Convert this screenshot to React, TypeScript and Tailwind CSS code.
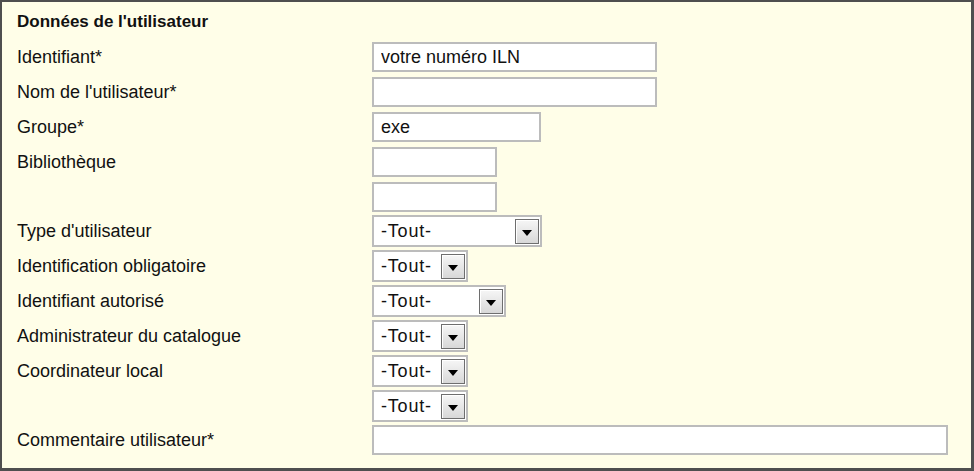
import React from 'react';

type Field =
  | { kind: 'input'; label: string; width: number; value?: string; gap: number }
  | { kind: 'select'; label: string; width: number; value: string; gap: number };

const fields: Field[] = [
  { kind: 'input', label: 'Identifiant*', width: 285, value: 'votre numéro ILN', gap: 5 },
  { kind: 'input', label: "Nom de l'utilisateur*", width: 285, gap: 5 },
  { kind: 'input', label: 'Groupe*', width: 169, value: 'exe', gap: 5 },
  { kind: 'input', label: 'Bibliothèque', width: 125, gap: 5 },
  { kind: 'input', label: '', width: 125, gap: 3 },
  { kind: 'select', label: "Type d'utilisateur", width: 170, value: '-Tout-', gap: 3 },
  { kind: 'select', label: 'Identification obligatoire', width: 96, value: '-Tout-', gap: 3 },
  { kind: 'select', label: 'Identifiant autorisé', width: 134, value: '-Tout-', gap: 3 },
  { kind: 'select', label: 'Administrateur du catalogue', width: 96, value: '-Tout-', gap: 3 },
  { kind: 'select', label: 'Coordinateur local', width: 96, value: '-Tout-', gap: 3 },
  { kind: 'select', label: '', width: 96, value: '-Tout-', gap: 3 },
  { kind: 'input', label: 'Commentaire utilisateur*', width: 576, gap: 0 },
];

function TextBox({ width, value }: { width: number; value?: string }) {
  return (
    <input
      type="text"
      readOnly
      value={value ?? ''}
      style={{ width }}
      className="h-[30px] border-2 border-[#bcbcbc] bg-white pl-[7px] text-[18px] text-[#111] outline-none"
    />
  );
}

function DropDown({ width, value }: { width: number; value: string }) {
  return (
    <div
      role="combobox"
      style={{ width }}
      className="flex h-[32px] items-center justify-between border-2 border-[#bcbcbc] bg-white pl-[7px] pr-[1px]"
    >
      <span className="text-[18px] leading-none tracking-[0.8px] text-[#111]">{value}</span>
      <span className="flex h-[25px] w-[24px] items-center justify-center border border-[#6e6e6e] bg-gradient-to-b from-[#f6f6f6] to-[#d8d8d8] pt-[3px] shadow-[inset_1px_1px_0_#ffffff]">
        <svg width="10" height="6" viewBox="0 0 10 6">
          <path d="M0 0 H10 L5 6 Z" fill="#000" />
        </svg>
      </span>
    </div>
  );
}

export default function App() {
  return (
    <div className="h-[471px] w-[974px] border-t-2 border-l-2 border-r-[3px] border-b-[3px] border-[#4f4f4f] bg-[#fffee8] pl-[15px] pt-[10px] font-['Liberation_Sans',Arial,sans-serif] text-[#111]">
      <h2 className="mb-[10px] h-[20px] text-[17px] font-bold leading-[20px]">Données de l'utilisateur</h2>
      <div className="flex flex-col">
        {fields.map((f, i) => (
          <div
            key={i}
            className={`flex items-center ${f.kind === 'input' ? 'h-[30px]' : 'h-[32px]'}`}
            style={{ marginBottom: f.gap }}
          >
            <span className="w-[355px] text-[18px] leading-none">{f.label}</span>
            {f.kind === 'input' ? (
              <TextBox width={f.width} value={f.value} />
            ) : (
              <DropDown width={f.width} value={f.value} />
            )}
          </div>
        ))}
      </div>
    </div>
  );
}
